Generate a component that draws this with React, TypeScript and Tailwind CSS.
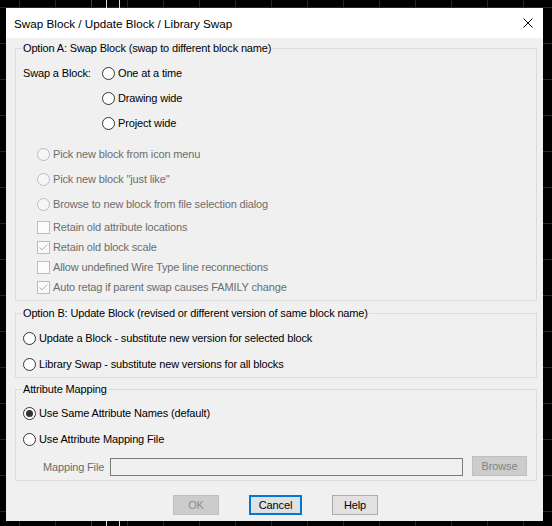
import React from 'react'

type RadioProps = {
  label: string
  checked?: boolean
  disabled?: boolean
  rowClass?: string
}

function Radio({ label, checked = false, disabled = false, rowClass = 'h-[25px]' }: RadioProps) {
  return (
    <div className={`flex items-center ${rowClass}`}>
      <span
        className={`flex items-center justify-center w-[13px] h-[13px] rounded-full border shrink-0 ${
          disabled ? 'border-[#bcbcbc] bg-[#f6f6f6]' : 'border-[#333333] bg-white'
        }`}
      >
        {checked && <span className="w-[7px] h-[7px] rounded-full bg-[#333333]" />}
      </span>
      <span className={`ml-[3px] whitespace-nowrap ${disabled ? 'text-[#6d6d6d]' : 'text-black'}`}>{label}</span>
    </div>
  )
}

function Check({ label, checked = false }: { label: string; checked?: boolean }) {
  return (
    <div className="flex items-center h-[20px]">
      <span className="w-[13px] h-[13px] border border-[#bcbcbc] bg-[#fbfbfb] shrink-0">
        {checked && (
          <svg width="11" height="11" viewBox="0 0 11 11" className="block">
            <path d="M1.5 5.5 L4 8 L9.5 2.5" fill="none" stroke="#b0b0b0" strokeWidth="1" />
          </svg>
        )}
      </span>
      <span className="ml-[3px] whitespace-nowrap text-[#6d6d6d]">{label}</span>
    </div>
  )
}

function Group({ title, className, children }: { title: string; className?: string; children: React.ReactNode }) {
  return (
    <fieldset className={`border border-[#dcdcdc] px-[7px] ${className ?? ''}`}>
      <legend className="-ml-[1px] px-[1px] h-[13px] leading-[13px] whitespace-nowrap">{title}</legend>
      {children}
    </fieldset>
  )
}

function CanvasGrid() {
  const xs = Array.from({ length: 15 }, (_, i) => 19 + i * 36)
  const ys = Array.from({ length: 15 }, (_, i) => 7 + i * 36)
  return (
    <svg className="absolute inset-0" width="552" height="526">
      {xs.map((x) => (
        <line key={`x${x}`} x1={x + 0.5} y1="0" x2={x + 0.5} y2="526" stroke={x === 91 ? '#1f5a1f' : '#262630'} />
      ))}
      {ys.map((y) => (
        <line key={`y${y}`} x1="0" y1={y + 0.5} x2="552" y2={y + 0.5} stroke="#262630" />
      ))}
      <line x1="106.5" y1="0" x2="106.5" y2="526" stroke="#dcdcdc" />
      <line x1="119.5" y1="0" x2="119.5" y2="526" stroke="#dcdcdc" />
    </svg>
  )
}

export default function App() {
  return (
    <div className="relative w-[552px] h-[526px] bg-black overflow-hidden flex items-start pl-[6px] pt-[8px] font-['Liberation_Sans',Arial,sans-serif] text-[11px] leading-[13px] tracking-[-0.15px] text-black">
      <CanvasGrid />

      <div className="relative w-[537px] h-[513px] flex flex-col bg-[#f0f0f0]">
        {/* title bar */}
        <div className="h-[30px] bg-white flex items-center justify-between pl-[8px] pr-[10px]">
          <span className="text-[11.7px] tracking-normal">Swap Block / Update Block / Library Swap</span>
          <svg width="10" height="10" viewBox="0 0 10 10">
            <path d="M0.5 0.5 L9.5 9.5 M9.5 0.5 L0.5 9.5" stroke="#000" strokeWidth="1" />
          </svg>
        </div>

        <div className="flex flex-col pl-[9px] pr-[6px] pt-[4px]">
          <Group title="Option A: Swap Block (swap to different block name)" className="pb-[3px]">
            <div className="flex pt-[6px]">
              <div className="w-[79px] h-[25px] flex items-center">Swap a Block:</div>
              <div className="flex flex-col">
                <Radio label="One at a time" />
                <Radio label="Drawing wide" />
                <Radio label="Project wide" />
              </div>
            </div>
            <div className="flex flex-col ml-[14px] mt-[6px]">
              <Radio label="Pick new block from icon menu" disabled />
              <Radio label={'Pick new block "just like"'} disabled />
              <Radio label="Browse to new block from file selection dialog" disabled />
              <Check label="Retain old attribute locations" />
              <Check label="Retain old block scale" checked />
              <Check label="Allow undefined Wire Type line reconnections" />
              <Check label="Auto retag if parent swap causes FAMILY change" checked />
            </div>
          </Group>

          <Group title="Option B: Update Block (revised or different version of same block name)" className="mt-[6px]">
            <div className="flex flex-col pt-[5px]">
              <Radio label="Update a Block - substitute new version for selected block" rowClass="h-[26px]" />
              <Radio label="Library Swap - substitute new versions for all blocks" rowClass="h-[26px]" />
            </div>
          </Group>

          <Group title="Attribute Mapping" className="mt-[5px] pb-[4px]">
            <div className="flex flex-col pt-[4px]">
              <Radio label="Use Same Attribute Names (default)" checked rowClass="h-[26px]" />
              <Radio label="Use Attribute Mapping File" rowClass="h-[26px]" />
            </div>
            <div className="flex items-start mt-[4px] h-[20px]">
              <span className="ml-[20px] w-[67px] h-[20px] flex items-center pt-[2px] text-[#6d6d6d]">Mapping File</span>
              <div className="mt-[2px] w-[353px] h-[18px] border border-[#7a7a7a] bg-[#f0f0f0]" />
              <div className="ml-[9px] w-[55px] h-[20px] border border-[#bfbfbf] bg-[#cccccc] flex items-center justify-center text-[#838383]">
                Browse
              </div>
            </div>
          </Group>
        </div>

        <div className="flex gap-[30px] ml-[167px] mt-[14px]">
          <button className="w-[46px] h-[20px] border border-[#bfbfbf] bg-[#cccccc] text-[#8d8d8d] flex items-center justify-center">
            OK
          </button>
          <button className="w-[53px] h-[20px] border-2 border-[#0078d7] bg-[#e1e1e1] flex items-center justify-center">
            Cancel
          </button>
          <button className="w-[46px] h-[20px] border border-[#adadad] bg-[#e1e1e1] flex items-center justify-center">
            Help
          </button>
        </div>
      </div>
    </div>
  )
}
